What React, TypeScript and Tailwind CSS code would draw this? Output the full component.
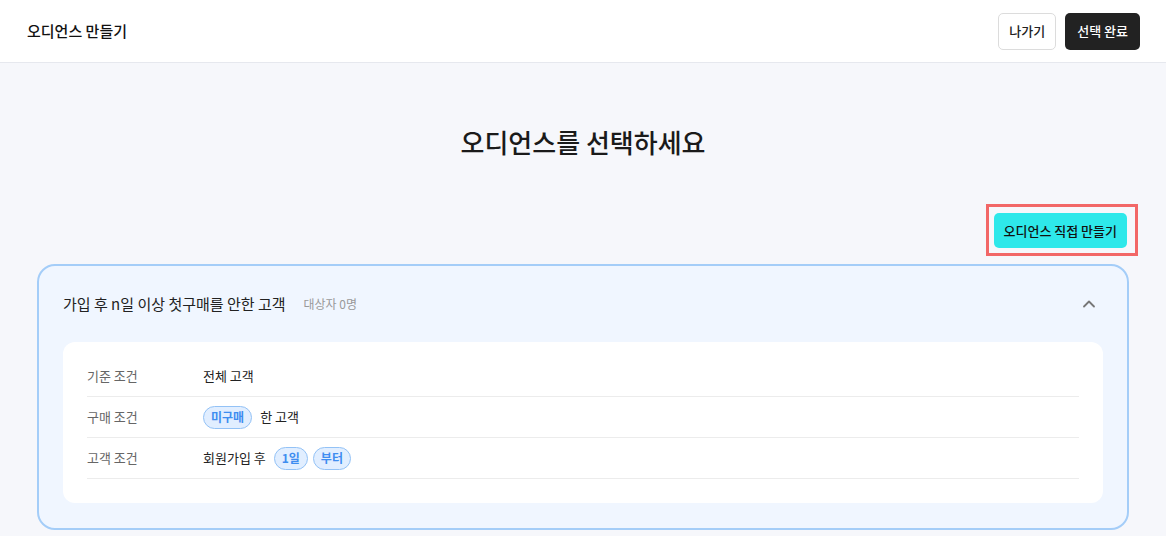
import { ChevronUp } from 'lucide-react'

const font = { fontFamily: '"Noto Sans CJK KR", "Noto Sans", sans-serif' }

function Badge({ children }: { children: React.ReactNode }) {
  return (
    <span className="inline-flex h-[23px] items-center rounded-full border border-[#93c2f6] bg-[#e1eeff] px-[7px] text-[12px] font-semibold text-[#3e8df0]">
      {children}
    </span>
  )
}

function Row({ label, children }: { label: string; children: React.ReactNode }) {
  return (
    <div className="flex h-[41px] items-center border-b border-[#ececec]">
      <div className="w-[116px] text-[13px] text-[#666]">{label}</div>
      <div className="flex items-center gap-[5px] text-[13px] text-[#222]">{children}</div>
    </div>
  )
}

export default function App() {
  return (
    <div className="min-h-[536px] bg-[#f6f7fb]" style={font}>
      <header className="flex h-[63px] items-center justify-between border-b border-[#e6e8ee] bg-white pl-[27px] pr-[26px]">
        <h1 className="text-[15px] font-medium text-[#111]">오디언스 만들기</h1>
        <div className="flex items-center gap-[9px]">
          <button className="h-[37px] rounded-[5px] border border-[#dcdcdc] bg-white px-[10px] text-[13px] font-medium text-[#222]">
            나가기
          </button>
          <button className="h-[37px] rounded-[5px] bg-[#222] px-[12px] text-[13px] font-medium text-white">
            선택 완료
          </button>
        </div>
      </header>

      <main className="px-[37px]">
        <h2 className="pt-[61px] text-center text-[26px] font-medium leading-[36px] text-[#1a1a1a]">
          오디언스를 선택하세요
        </h2>

        <div className="mt-[53px] flex justify-end pr-[2px]">
          <div className="relative">
            <button className="h-[35px] rounded-[5px] bg-[#2ee8ea] px-[10px] text-[13px] font-medium text-[#111]">
              오디언스 직접 만들기
            </button>
            <div className="pointer-events-none absolute -bottom-[8px] -left-[8px] -right-[11px] -top-[9px] border-[3px] border-[#f26767]" />
          </div>
        </div>

        <section className="mt-[16px] rounded-[18px] border-2 border-[#a4cdf8] bg-[#f0f6ff] px-[24px] pb-[25px] pt-[24px]">
          <div className="flex h-[28px] items-center justify-between">
            <div className="flex items-center gap-[18px]">
              <span className="text-[15px] text-[#222]">가입 후 n일 이상 첫구매를 안한 고객</span>
              <span className="text-[12px] text-[#999]">대상자 0명</span>
            </div>
            <ChevronUp size={20} strokeWidth={2.2} className="mr-[4px] text-[#777]" />
          </div>

          <div className="mt-[24px] rounded-[12px] bg-white px-[24px] pb-[24px] pt-[14px]">
            <Row label="기준 조건">
              <span>전체 고객</span>
            </Row>
            <Row label="구매 조건">
              <Badge>미구매</Badge>
              <span className="ml-[3px]">한 고객</span>
            </Row>
            <Row label="고객 조건">
              <span className="mr-[3px]">회원가입 후</span>
              <Badge>1일</Badge>
              <Badge>부터</Badge>
            </Row>
          </div>
        </section>
      </main>
    </div>
  )
}
